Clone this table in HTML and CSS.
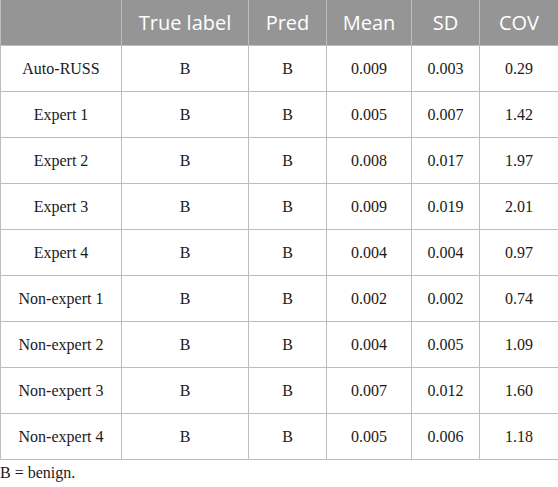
FILE: index.html
```html
<!DOCTYPE html>
<html>
<head>
<meta charset="utf-8">
<link rel="stylesheet" href="styles.css">
</head>
<body>
<table class="data">
  <colgroup>
    <col class="c1"><col class="c2"><col class="c3"><col class="c4"><col class="c5"><col class="c6">
  </colgroup>
  <thead>
    <tr><th></th><th>True label</th><th>Pred</th><th>Mean</th><th>SD</th><th>COV</th></tr>
  </thead>
  <tbody>
    <tr><td>Auto-RUSS</td><td>B</td><td>B</td><td>0.009</td><td>0.003</td><td>0.29</td></tr>
    <tr><td>Expert 1</td><td>B</td><td>B</td><td>0.005</td><td>0.007</td><td>1.42</td></tr>
    <tr><td>Expert 2</td><td>B</td><td>B</td><td>0.008</td><td>0.017</td><td>1.97</td></tr>
    <tr><td>Expert 3</td><td>B</td><td>B</td><td>0.009</td><td>0.019</td><td>2.01</td></tr>
    <tr><td>Expert 4</td><td>B</td><td>B</td><td>0.004</td><td>0.004</td><td>0.97</td></tr>
    <tr><td>Non-expert 1</td><td>B</td><td>B</td><td>0.002</td><td>0.002</td><td>0.74</td></tr>
    <tr><td>Non-expert 2</td><td>B</td><td>B</td><td>0.004</td><td>0.005</td><td>1.09</td></tr>
    <tr><td>Non-expert 3</td><td>B</td><td>B</td><td>0.007</td><td>0.012</td><td>1.60</td></tr>
    <tr><td>Non-expert 4</td><td>B</td><td>B</td><td>0.005</td><td>0.006</td><td>1.18</td></tr>
  </tbody>
</table>
<p class="note">B = benign.</p>
</body>
</html>
```
FILE: styles.css
```css
html, body {
  margin: 0;
  padding: 0;
  background: #ffffff;
}
.data {
  width: 558px;
  table-layout: fixed;
  border-collapse: collapse;
}
.c1 { width: 121px; }
.c2 { width: 127px; }
.c3 { width: 78px; }
.c4 { width: 85px; }
.c5 { width: 68px; }
.c6 { width: 79px; }
.data th {
  background: #959595;
  color: #ffffff;
  font-family: "Open Sans", "Noto Sans", sans-serif;
  font-weight: 400;
  font-size: 20px;
  height: 45px;
  padding: 0;
  text-align: center;
  border: 1px solid #bdbdbd;
  border-top: none;
}
.data td {
  font-family: "Liberation Serif", serif;
  font-size: 16px;
  color: #1a1a1a;
  height: 45px;
  padding: 0;
  text-align: center;
  border: 1px solid #bdbdbd;
}
.note {
  margin: 4px 0 0 0;
  font-family: "Liberation Serif", serif;
  font-size: 16px;
  color: #1a1a1a;
}
```
